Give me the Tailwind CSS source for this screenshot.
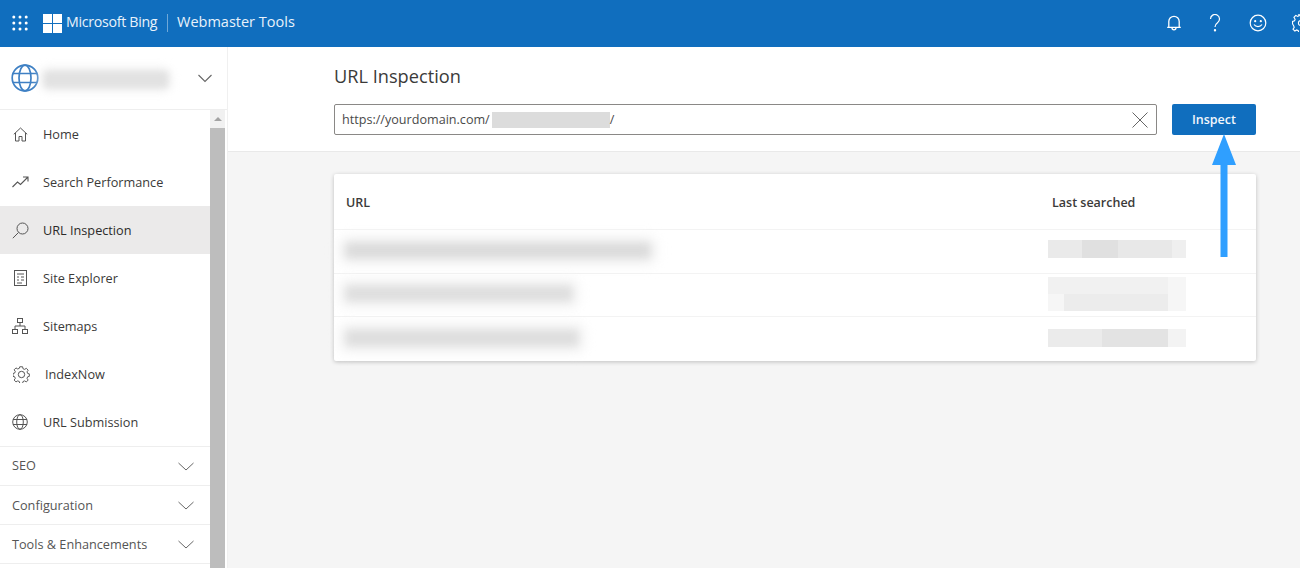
<!DOCTYPE html>
<html lang="en">
<head>
    <meta charset="UTF-8">
    <title>URL Inspection - Bing Webmaster Tools</title>
    <script src="https://cdn.jsdelivr.net/npm/@tailwindcss/browser@4"></script>
</head>
<body class="relative h-[568px] w-[1300px] overflow-hidden bg-white font-['Open_Sans','Noto_Sans',sans-serif] text-[#323130]">

    <!-- Top bar -->
    <header class="flex h-[47px] items-center whitespace-nowrap bg-[#106ebe] text-white">
        <svg class="ml-3 mb-[1px] h-4 w-4 shrink-0" viewBox="0 0 16 16" fill="#fff">
            <circle cx="1.8" cy="2" r="1.5"/><circle cx="8" cy="2" r="1.5"/><circle cx="14.2" cy="2" r="1.5"/>
            <circle cx="1.8" cy="8" r="1.5"/><circle cx="8" cy="8" r="1.5"/><circle cx="14.2" cy="8" r="1.5"/>
            <circle cx="1.8" cy="14" r="1.5"/><circle cx="8" cy="14" r="1.5"/><circle cx="14.2" cy="14" r="1.5"/>
        </svg>
        <svg class="ml-[15px] mb-[1px] h-[19px] w-[19px] shrink-0" viewBox="0 0 19 19" fill="#fff">
            <rect width="9" height="9"/><rect x="10" width="9" height="9"/><rect y="10" width="9" height="9"/><rect x="10" y="10" width="9" height="9"/>
        </svg>
        <span class="ml-[4px] mb-[3px] w-[96px] text-[14.2px] tracking-[-0.3px] text-[#e8f2fb]">Microsoft Bing</span>
        <span class="ml-[5px] mb-[1px] h-[18px] w-px bg-white/40"></span>
        <span class="ml-[9px] mb-[3px] text-[14.5px] text-[#e8f2fb]">Webmaster Tools</span>

        <div class="mb-[1px] ml-auto flex items-center">
            <svg class="h-[16px] w-[16px] shrink-0" viewBox="0 0 16 16" fill="none" stroke="#fff" stroke-width="1.3">
                <path d="M2.800 12V6.500a5.200 5.200 0 0 1 10.400 0V12M1.200 12.400h13.600M6 12.800a2 2 0 0 0 4 0"/>
            </svg>
            <svg class="ml-[27px] h-[18px] w-[12px] shrink-0" viewBox="0 0 12 18" fill="none" stroke="#fff" stroke-width="1.2">
                <path d="M1.500 5a4.500 4.500 0 1 1 7 3.700C6.800 9.900 6 10.800 6 13"/><circle cx="6" cy="16.300" r=".6" fill="#fff"/>
            </svg>
            <svg class="ml-[28px] h-[18px] w-[18px] shrink-0" viewBox="0 0 18 18" fill="none" stroke="#fff" stroke-width="1.2">
                <circle cx="9" cy="9" r="7.800"/><circle cx="6.200" cy="7.200" r=".5" fill="#fff"/><circle cx="11.800" cy="7.200" r=".5" fill="#fff"/><path d="M5 10.500c1.800 2.800 6.200 2.800 8 0"/>
            </svg>
            <svg class="ml-[25px] mr-[-10px] h-[18px] w-[18px] shrink-0" viewBox="0 0 18 18" fill="none" stroke="#fff" stroke-width="1.2">
                <circle cx="9" cy="9" r="2.600"/><path d="M7.500 1.200h3l.5 2.300 1.700.8 2-1.200 2 2.200-1.300 2 .6 1.700 2.200.6v2.800l-2.200.6-.6 1.700 1.300 2-2 2-2-1.200-1.700.8-.5 2.300h-3l-.5-2.300-1.700-.8-2 1.200-2-2 1.300-2-.6-1.700L.8 11v-2.800l2.200-.6.600-1.700-1.300-2 2-2.200 2 1.200 1.700-.8z" transform="scale(.92) translate(-.2 -.2)"/>
            </svg>
        </div>
    </header>

    <div class="flex h-[521px]">
        <!-- Sidebar -->
        <aside class="flex w-[228px] shrink-0 flex-col border-r border-[#f0f0f0]">
            <div class="flex h-[63px] shrink-0 items-center border-b border-[#eeeeee] pl-[11px]">
                <svg class="h-[28px] w-[28px] shrink-0" viewBox="0 0 28 28" fill="none" stroke="#3f80c4" stroke-width="1.700">
                    <circle cx="14" cy="14" r="12.800"/><ellipse cx="14" cy="14" rx="6" ry="12.800"/><path d="M2 9.500h24M2 18.500h24"/>
                </svg>
                <div class="ml-[5px] mt-[2px] h-[17px] w-[124px] rounded-sm bg-[#e2e2e2] shadow-[0_0_6px_3px_#eeeeee] blur-[3px]"></div>
                <svg class="ml-[30px] h-[9px] w-[14px]" viewBox="0 0 14 9" fill="none" stroke="#666" stroke-width="1.100"><path d="M.5 1l6.500 6.500L13.500 1"/></svg>
            </div>

            <div class="flex min-h-0 flex-1">
                <nav class="w-[210px] shrink-0 text-[12.7px] text-[#3b3a39]">
                    <a class="flex h-12 items-center pl-[13px]">
                        <svg class="h-[15px] w-[15px] shrink-0" viewBox="0 0 15 15" fill="none" stroke="#555" stroke-width="1"><path d="M.8 7.300L7.500 1l6.700 6.300M2.500 6v8h3.500V9.500h3V14h3.500V6"/></svg>
                        <span class="ml-[15px] pt-px">Home</span>
                    </a>
                    <a class="flex h-12 items-center pl-[12px]">
                        <svg class="h-[12px] w-[17px] shrink-0" viewBox="0 0 17 12" fill="none" stroke="#555" stroke-width="1.100"><path d="M.5 11l5-5 3 2.500L16 1M11 1h5v4.500"/></svg>
                        <span class="ml-[14px] pt-px">Search Performance</span>
                    </a>
                    <a class="flex h-12 items-center bg-[#ebeaea] pl-[12px] text-[#2b2a29]">
                        <svg class="h-[17px] w-[17px] shrink-0" viewBox="0 0 17 17" fill="none" stroke="#555" stroke-width="1"><circle cx="10.500" cy="6.500" r="5.500"/><path d="M6.500 10.500L.8 16.200"/></svg>
                        <span class="ml-[14px] pt-px">URL Inspection</span>
                    </a>
                    <a class="flex h-12 items-center pl-[14px]">
                        <svg class="h-[16px] w-[13px] shrink-0" viewBox="0 0 13 16" fill="none" stroke="#555" stroke-width="1"><rect x=".5" y=".5" width="12" height="15"/><path d="M3 4h7M3 7h2M7 7h3M3 10h2M7 10h3M3 13h5"/></svg>
                        <span class="ml-[16px] pt-px">Site Explorer</span>
                    </a>
                    <a class="flex h-12 items-center pl-[12px]">
                        <svg class="h-[16px] w-[16px] shrink-0" viewBox="0 0 16 16" fill="none" stroke="#555" stroke-width="1"><rect x="5.500" y=".5" width="5" height="4"/><rect x=".5" y="11.500" width="5" height="4"/><rect x="10.500" y="11.500" width="5" height="4"/><path d="M8 4.500V8M3 11.500V8h10v3.500"/></svg>
                        <span class="ml-[15px] pt-px">Sitemaps</span>
                    </a>
                    <a class="flex h-12 items-center pl-[13px]">
                        <svg class="h-[17px] w-[17px] shrink-0" viewBox="0 0 17 17" fill="none" stroke="#555" stroke-width="1"><path d="M7 .8h3l.4 2 1.700.7 1.800-1.100 1.900 2-1.200 1.700.7 1.700 1.700.4v2.600l-1.700.4-.7 1.700 1.200 1.700-1.900 2-1.800-1.100-1.700.7-.4 2H7l-.4-2-1.700-.7-1.800 1.100-1.900-2 1.200-1.700-.7-1.700-1.700-.4V7.800l1.700-.4.7-1.700L1.200 4l1.900-2 1.800 1.100 1.700-.7z" transform="scale(.96)"/><circle cx="8.500" cy="8.500" r="3.200"/></svg>
                        <span class="ml-[15px] pt-px">IndexNow</span>
                    </a>
                    <a class="flex h-[49px] items-center border-b border-[#eeeeee] pl-[12px]">
                        <svg class="h-[16px] w-[16px] shrink-0" viewBox="0 0 16 16" fill="none" stroke="#555" stroke-width="1"><circle cx="8" cy="8" r="7.300"/><ellipse cx="8" cy="8" rx="3.300" ry="7.300"/><path d="M1 5.500h14M1 10.500h14"/></svg>
                        <span class="ml-[15px] pt-px">URL Submission</span>
                    </a>
                    <a class="flex h-[39px] items-center justify-between border-b border-[#eeeeee] pl-3 pr-[16px] text-[#555]">
                        <span>SEO</span>
                        <svg class="h-[9px] w-4 shrink-0" viewBox="0 0 16 9" fill="none" stroke="#666" stroke-width="1"><path d="M.5 1L8 8l7.500-7"/></svg>
                    </a>
                    <a class="flex h-[39px] items-center justify-between border-b border-[#eeeeee] pl-3 pr-[16px] text-[#555]">
                        <span class="pt-px">Configuration</span>
                        <svg class="h-[9px] w-4 shrink-0" viewBox="0 0 16 9" fill="none" stroke="#666" stroke-width="1"><path d="M.5 1L8 8l7.500-7"/></svg>
                    </a>
                    <a class="flex h-[39px] items-center justify-between border-b border-[#eeeeee] pl-3 pr-[16px] text-[#555]">
                        <span class="pt-px">Tools &amp; Enhancements</span>
                        <svg class="h-[9px] w-4 shrink-0" viewBox="0 0 16 9" fill="none" stroke="#666" stroke-width="1"><path d="M.5 1L8 8l7.500-7"/></svg>
                    </a>
                </nav>

                <!-- Scrollbar -->
                <div class="flex w-[15px] shrink-0 flex-col bg-[#f1f1f1]">
                    <div class="flex h-[18px] shrink-0 items-center justify-center">
                        <div class="h-0 w-0 border-x-4 border-b-[4px] border-x-transparent border-b-[#a3a3a3]"></div>
                    </div>
                    <div class="flex-1 bg-[#bdbdbd]"></div>
                </div>
            </div>
        </aside>

        <!-- Main -->
        <main class="flex min-w-0 flex-1 flex-col bg-[#f5f5f5]">
            <section class="h-[105px] shrink-0 border-b border-[#e9e9e9] bg-white pl-[106px] pr-[44px]">
                <h1 class="pt-[16px] text-[18.2px] leading-[26px] text-[#3b3a39]">URL Inspection</h1>
                <div class="mt-[15px] flex gap-[15px]">
                    <div class="flex h-[31px] flex-1 items-center rounded-[2px] border border-[#8a8886] pl-[7px] pr-[8px] text-[12.6px] text-[#4a4a4a]">
                        <span class="pt-px">https://yourdomain.com/</span>
                        <span class="ml-[2px] h-[16px] w-[118px] bg-[#dcdcdc]"></span>
                        <span class="pt-px">/</span>
                        <svg class="ml-auto h-4 w-4 shrink-0" viewBox="0 0 16 16" fill="none" stroke="#666" stroke-width="1"><path d="M.5.5l15 15M15.500.5l-15 15"/></svg>
                    </div>
                    <button class="h-[31px] w-[84px] rounded-[2px] bg-[#106ebe] pt-px text-[12.5px] font-semibold text-[#f2f7fc]">Inspect</button>
                </div>
            </section>

            <section class="pl-[106px] pr-[44px] pt-[22px]">
                <div class="rounded-[2px] bg-white shadow-[0_1px_4px_rgba(0,0,0,0.22)]">
                    <div class="flex h-[56px] items-center border-b border-[#f3f3f3] pt-[3px] text-[12.5px] font-semibold text-[#3b3a39]">
                        <span class="ml-3 w-[706px]">URL</span>
                        <span>Last searched</span>
                    </div>
                    <div class="flex h-[44px] items-center border-b border-[#f3f3f3]">
                        <div class="mb-[3px] ml-3 h-[15px] w-[304px] bg-[#dbdbdb] shadow-[0_0_10px_5px_#eeeeee] blur-[4px]"></div>
                        <div class="mb-[5px] ml-[398px] flex h-[18px] w-[138px]">
                            <span class="w-[34px] bg-[#eaeaea]"></span><span class="w-[36px] bg-[#e0e0e0]"></span><span class="w-[54px] bg-[#e8e8e8]"></span><span class="w-[14px] bg-[#efefef]"></span>
                        </div>
                    </div>
                    <div class="flex h-[43px] items-center border-b border-[#f3f3f3]">
                        <div class="mb-[4px] ml-3 h-[15px] w-[226px] bg-[#dedede] shadow-[0_0_10px_5px_#efefef] blur-[4px]"></div>
                        <div class="mb-[3px] ml-[476px] flex h-[34px] w-[138px] flex-col bg-[#f6f6f6]">
                            <div class="h-[17px] w-[120px] bg-[#f1f1f1]"></div>
                            <div class="ml-[16px] h-[17px] w-[104px] bg-[#ececec]"></div>
                        </div>
                    </div>
                    <div class="flex h-[44px] items-center">
                        <div class="mb-[3px] ml-3 h-[16px] w-[232px] bg-[#dedede] shadow-[0_0_10px_5px_#efefef] blur-[4px]"></div>
                        <div class="mb-[3px] ml-[470px] flex h-[18px] w-[138px]">
                            <span class="w-[54px] bg-[#ebebeb]"></span><span class="w-[66px] bg-[#e3e3e3]"></span><span class="w-[18px] bg-[#f3f3f3]"></span>
                        </div>
                    </div>
                </div>
            </section>
        </main>
    </div>

    <!-- Annotation arrow over the page -->
    <svg class="absolute left-[1208px] top-[134px] h-[123px] w-[32px]" viewBox="0 0 32 123" fill="#2f9fff">
        <path d="M16 0L28 31H19.500L19.500 123H12.500L12.500 31H4z"/>
    </svg>
</body>
</html>
